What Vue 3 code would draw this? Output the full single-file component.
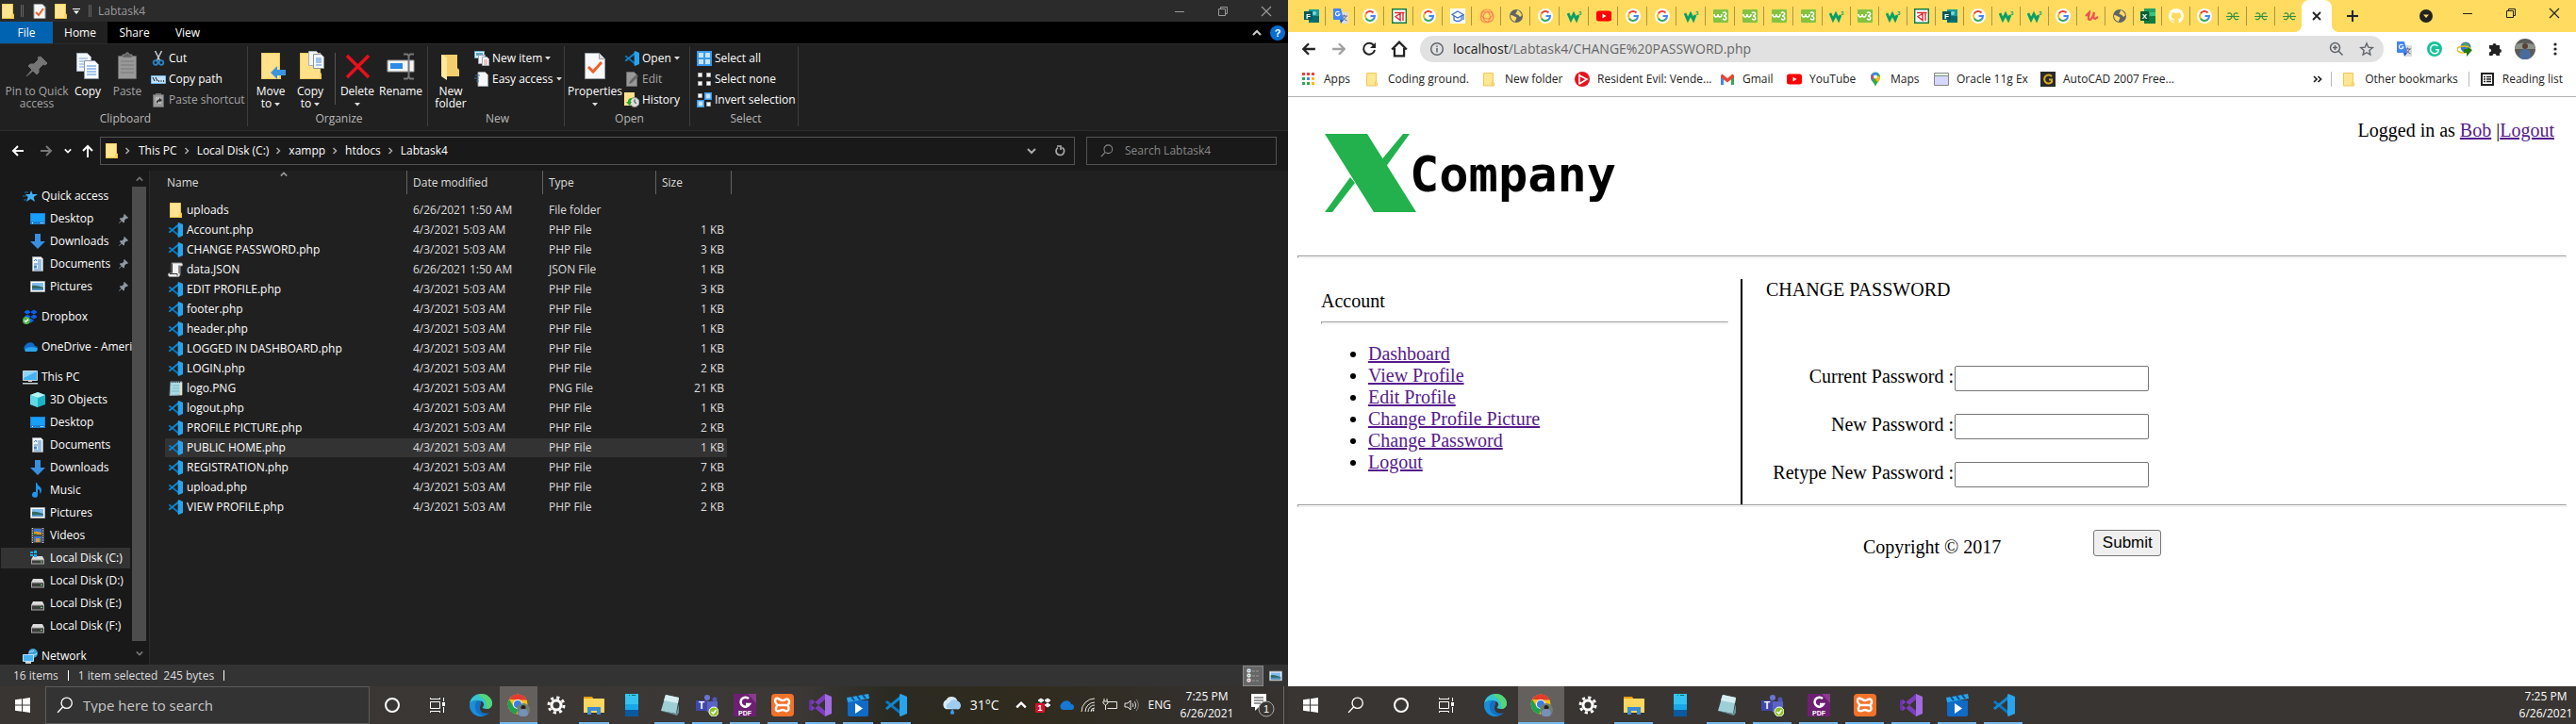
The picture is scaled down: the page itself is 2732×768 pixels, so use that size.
<script setup>
import { ref } from 'vue'

const clipboardSmall = [
  { icon: 'cut', text: 'Cut' },
  { icon: 'copypath', text: 'Copy path' },
  { icon: 'pasteshortcut', text: 'Paste shortcut', off: true }
]
const newSmall = [
  { icon: 'newitem', text: 'New item', menu: true },
  { icon: 'easyaccess', text: 'Easy access', menu: true }
]
const openSmall = [
  { icon: 'vscode', text: 'Open', menu: true },
  { icon: 'edit', text: 'Edit', off: true },
  { icon: 'history', text: 'History' }
]
const selectSmall = [
  { icon: 'selectall', text: 'Select all' },
  { icon: 'selectnone', text: 'Select none' },
  { icon: 'invert', text: 'Invert selection' }
]
const crumbs = ['This PC', 'Local Disk (C:)', 'xampp', 'htdocs', 'Labtask4']

const nav = [
  { head: { icon: 'quick', text: 'Quick access' }, items: [
    { icon: 'desktop', text: 'Desktop', pin: true },
    { icon: 'download', text: 'Downloads', pin: true },
    { icon: 'document', text: 'Documents', pin: true },
    { icon: 'picture', text: 'Pictures', pin: true }
  ] },
  { head: { icon: 'dropboxok', text: 'Dropbox' }, items: [] },
  { head: { icon: 'onedrive', text: 'OneDrive - Ameri' }, items: [] },
  { head: { icon: 'pc', text: 'This PC' }, items: [
    { icon: 'cube', text: '3D Objects' },
    { icon: 'desktop', text: 'Desktop' },
    { icon: 'document', text: 'Documents' },
    { icon: 'download', text: 'Downloads' },
    { icon: 'music', text: 'Music' },
    { icon: 'picture', text: 'Pictures' },
    { icon: 'video', text: 'Videos' },
    { icon: 'diskwin', text: 'Local Disk (C:)', on: true },
    { icon: 'disk', text: 'Local Disk (D:)' },
    { icon: 'disk', text: 'Local Disk (E:)' },
    { icon: 'disk', text: 'Local Disk (F:)' }
  ] },
  { head: { icon: 'network', text: 'Network' }, items: [] }
]

const old = '4/3/2021 5:03 AM'
const recent = '6/26/2021 1:50 AM'
const files = [
  ['folder', 'uploads', recent, 'File folder', ''],
  ['vscode', 'Account.php', old, 'PHP File', '1 KB'],
  ['vscode', 'CHANGE PASSWORD.php', old, 'PHP File', '3 KB'],
  ['json', 'data.JSON', recent, 'JSON File', '1 KB'],
  ['vscode', 'EDIT PROFILE.php', old, 'PHP File', '3 KB'],
  ['vscode', 'footer.php', old, 'PHP File', '1 KB'],
  ['vscode', 'header.php', old, 'PHP File', '1 KB'],
  ['vscode', 'LOGGED IN DASHBOARD.php', old, 'PHP File', '1 KB'],
  ['vscode', 'LOGIN.php', old, 'PHP File', '2 KB'],
  ['notes', 'logo.PNG', old, 'PNG File', '21 KB'],
  ['vscode', 'logout.php', old, 'PHP File', '1 KB'],
  ['vscode', 'PROFILE PICTURE.php', old, 'PHP File', '2 KB'],
  ['vscode', 'PUBLIC HOME.php', old, 'PHP File', '1 KB'],
  ['vscode', 'REGISTRATION.php', old, 'PHP File', '7 KB'],
  ['vscode', 'upload.php', old, 'PHP File', '2 KB'],
  ['vscode', 'VIEW PROFILE.php', old, 'PHP File', '2 KB']
]
const selected = ref('PUBLIC HOME.php')

const apps = [
  { icon: 'edge', name: 'Microsoft Edge' },
  { icon: 'chrome', name: 'Google Chrome', run: true, active: true },
  { icon: 'gear', name: 'Settings' },
  { icon: 'explorer', name: 'File Explorer', run: true },
  { icon: 'phone', name: 'Your Phone' },
  { icon: 'notepad', name: 'Notepad', run: true },
  { icon: 'teams', name: 'Microsoft Teams', run: true },
  { icon: 'foxit', name: 'Foxit PDF', run: true },
  { icon: 'xampp', name: 'XAMPP', run: true },
  { icon: 'vstudio', name: 'Visual Studio', run: true },
  { icon: 'movies', name: 'Movies', run: true },
  { icon: 'vscode', name: 'Visual Studio Code', run: true }
]

const wideTabs = ['forms', 'translate', 'google', 'bangla', 'google', 'scholar', 'rings', 'globe', 'google', 'w3', 'youtube', 'google', 'google', 'w3', 'w3s', 'w3s', 'w3s', 'w3s']
const slimTabs = ['w3', 'w3s', 'w3', 'bangla', 'forms', 'google', 'w3', 'w3', 'google', 'udemy', 'globe', 'excel', 'github', 'google', 'gfg', 'gfg', 'gfg']

const bookmarks = [
  { icon: 'appsgrid', text: 'Apps' },
  { icon: 'bmfolder', text: 'Coding ground.' },
  { icon: 'bmfolder', text: 'New folder' },
  { icon: 'redplay', text: 'Resident Evil: Vende...' },
  { icon: 'gmail', text: 'Gmail' },
  { icon: 'youtube', text: 'YouTube' },
  { icon: 'maps', text: 'Maps' },
  { icon: 'window', text: 'Oracle 11g Ex' },
  { icon: 'goldg', text: 'AutoCAD 2007 Free...' }
]
const links = ['Dashboard', 'View Profile', 'Edit Profile', 'Change Profile Picture', 'Change Password', 'Logout']
</script>

<template>
  <svg class="sprite" aria-hidden="true">
    <symbol id="folder" viewBox="0 0 16 16"><path d="M2 0h12v10.500l1 .5v5H2z" fill="#f0c040"/><path d="M2.500.5H13v10l1 .5v4H2.500z" fill="#ffe591"/><path d="M12 11h2v4.500h-2z" fill="#ffd65c"/></symbol>
    <symbol id="doccheck" viewBox="0 0 16 16"><path d="M2 .5h9l3 3v12H2z" fill="#f4f6f8" stroke="#9aa0a6"/><path d="M4 9l3 3 5-7" fill="none" stroke="#f0622a" stroke-width="2"/></symbol>
    <symbol id="pin" viewBox="0 0 32 32"><path d="M20 6l7 7-2 2-2-1-5 5v4l-2 2-4-4-7 6 6-7-4-4 2-2h4l5-5-1-2z" fill="#757575" stroke="#757575"/></symbol>
    <symbol id="minipin" viewBox="0 0 10 10"><path d="M6 0l4 4-1 1-1-.3-2 2v2L5 9.500 3 7.500.3 10 0 9.500 2.500 7 .8 5l.7-.8h2l2-2L5 1z" fill="#8e99a3"/></symbol>
    <symbol id="copy" viewBox="0 0 32 32"><path d="M4.500 2.500h11l4 4v15h-15z" fill="#f2f5fa" stroke="#a8b0ba"/><path d="M7 8h9M7 11h9M7 14h9M7 17h9" stroke="#7ea8dc"/><path d="M12.500 10.500h11l4 4v15h-15z" fill="#f8fafc" stroke="#8c949e"/><path d="M15 16h10M15 19h10M15 22h10M15 25h10" stroke="#4a8fe2"/></symbol>
    <symbol id="paste" viewBox="0 0 32 32"><path d="M6.500 5.500h19v24h-19z" fill="#999" stroke="#666"/><path d="M9 11h14M9 15h14M9 19h14M9 23h14" stroke="#777"/><path d="M11 7V4h3l1-2h2l1 2h3v3z" fill="#5f5f5f" stroke="#888"/></symbol>
    <symbol id="cut" viewBox="0 0 16 16"><path d="M4.500 0L10 11M11.500 0L6 11" stroke="#c5ccd3" stroke-width="1.500"/><circle cx="5" cy="12.500" r="2.300" fill="none" stroke="#2a86c8" stroke-width="1.700"/><circle cx="11" cy="12.500" r="2.300" fill="none" stroke="#2a86c8" stroke-width="1.700"/></symbol>
    <symbol id="copypath" viewBox="0 0 16 16"><path d="M.5 4.500h15v8H.5z" fill="#bfe0fa" stroke="#77b9ea"/><path d="M2 6l2 4M5 6l2 4" stroke="#111"/><path d="M8 10h1M10.500 10h1M13 10h1" stroke="#111" stroke-width="1.500"/></symbol>
    <symbol id="pasteshortcut" viewBox="0 0 16 16"><path d="M2.500 2.500h11v13h-11z" fill="#999" stroke="#666"/><path d="M5 1h6v2H5z" fill="#777"/><path d="M5 5h6v7H5z" fill="#bbb"/><path d="M6 12V9l3-2V5.500l3 3-3 2V9z" fill="#333"/></symbol>
    <symbol id="moveto" viewBox="0 0 32 32"><path d="M6 2h20v21l1 1v6H6z" fill="#f3cd5a"/><path d="M7 3h18v26H7z" fill="#ffe18a"/><path d="M16 23l7-7v4h9v6h-9v4z" fill="#3a94e0"/></symbol>
    <symbol id="copyto" viewBox="0 0 32 32"><path d="M5 2h22v21l1 1v6H5z" fill="#f3cd5a"/><path d="M6 3h20v26H6z" fill="#ffe18a"/><path d="M14.500.5h8l2 2v13h-10z" fill="#f2f5fa" stroke="#a8b0ba"/><path d="M19.500 3.500h8l3 3v12h-11z" fill="#f8fafc" stroke="#8c949e"/><path d="M22 8h6M22 10h6M22 12h6M22 15h6" stroke="#4a8fe2"/></symbol>
    <symbol id="delete" viewBox="0 0 32 32"><path d="M5 5l23 23M28 5L5 28" stroke="#e8101c" stroke-width="3.500"/></symbol>
    <symbol id="rename" viewBox="0 0 32 32"><path d="M2 10h28v12H2z" fill="#f5f5f5" stroke="#9a9a9a"/><path d="M5 13h13v6H5z" fill="#2e8ae6"/><path d="M19 3.500h4l1.500 2 1.500-2h4M24.500 4v25M19 29.500h4l1.500-2 1.500 2h4" fill="none" stroke="#777" stroke-width="2"/></symbol>
    <symbol id="newfolder" viewBox="0 0 32 32"><path d="M6 4h17v14l2 2v7H6z" fill="#f2cf6b"/><path d="M6 4l6 3v24l-6-4z" fill="#ffe79e"/></symbol>
    <symbol id="properties" viewBox="0 0 32 32"><path d="M5.500 2.500h15l6 6v21h-21z" fill="#f6f8fa" stroke="#9aa0a6"/><path d="M20.500 2.500v6h6" fill="#ddd" stroke="#9aa0a6"/><path d="M9 17l5 5 9-10" fill="none" stroke="#f0622a" stroke-width="3"/></symbol>
    <symbol id="newitem" viewBox="0 0 16 16"><path d="M.5.5h10v7H.5z" fill="#dff0fb" stroke="#6aa9cf"/><path d="M2 2h7v3H2z" fill="#5aa0c0"/><path d="M4.500 4.500h7v9h-7z" fill="#f2f5fa" stroke="#9aa5b0"/><path d="M8.500 6.500h5l2 2v7h-7z" fill="#fff" stroke="#9aa5b0"/><path d="M10 10h4M10 12h4M10 14h4" stroke="#d88"/></symbol>
    <symbol id="easyaccess" viewBox="0 0 16 16"><path d="M4 .5h7.500l3 3v12H4z" fill="#f6f8fa" stroke="#9aa0a6"/><path d="M1 4h5M0 7h5M2 10h3" stroke="#3c6ea8"/></symbol>
    <symbol id="vscode" viewBox="0 0 24 24"><path d="M1 8.500L3 7l15 12v4L1.500 9.500z" fill="#0b76bd"/><path d="M1 15.500L3 17 18 5V1L1.500 14.500z" fill="#1088d0"/><path d="M17 0l7 3v18l-7 3-1-1V1z" fill="#28a4ee"/></symbol>
    <symbol id="edit" viewBox="0 0 16 16"><path d="M2.500.5h8l3 3v12h-11z" fill="#999" stroke="#6a6a6a"/><path d="M5 13l1-3 7-7 2 2-7 7z" fill="#666"/></symbol>
    <symbol id="history" viewBox="0 0 16 16"><path d="M0 0h11v14H0z" fill="#ffe18a"/><circle cx="11" cy="10.500" r="5" fill="#ddd" stroke="#888"/><path d="M11 7.500v3l2 1" stroke="#333" fill="none"/><path d="M8 6C4 6 4 9 4 10H2l3.500 4L8 10H6.500C6.500 8 8 8 8 8z" fill="#28a428"/></symbol>
    <symbol id="selectall" viewBox="0 0 16 16"><path d="M0 0h16v16H0z" fill="#3a9ae8"/><path d="M2 2h5v5H2zM9 2h5v5H9zM2 9h5v5H2zM9 9h5v5H9z" fill="#c4e4fb"/></symbol>
    <symbol id="selectnone" viewBox="0 0 16 16"><path d="M1.500 1.500h4v4h-4zM10.500 1.500h4v4h-4zM1.500 10.500h4v4h-4zM10.500 10.500h4v4h-4z" fill="#fff" stroke="#aaa"/></symbol>
    <symbol id="invert" viewBox="0 0 16 16"><path d="M1.500 1.500h4v4h-4zM10.500 10.500h4v4h-4z" fill="#fff" stroke="#aaa"/><path d="M8.800.8h6.400v6.400H8.800zM.8 8.800h6.400v6.400H.8z" fill="#c4e4fb" stroke="#3a9ae8" stroke-width="1.600"/></symbol>
    <symbol id="mag" viewBox="0 0 16 16"><circle cx="9.500" cy="6" r="5" fill="none" stroke="currentColor" stroke-width="1.200"/><path d="M6 9.500L1 15" stroke="currentColor" stroke-width="1.300"/></symbol>
    <symbol id="arrowl" viewBox="0 0 14 14"><path d="M7 2L2 7l5 5M2 7h11" fill="none" stroke="currentColor" stroke-width="2"/></symbol>
    <symbol id="arrowr" viewBox="0 0 14 14"><path d="M7 2l5 5-5 5M12 7H1" fill="none" stroke="currentColor" stroke-width="2"/></symbol>
    <symbol id="arrowu" viewBox="0 0 14 14"><path d="M2 7l5-5 5 5M7 2v12" fill="none" stroke="currentColor" stroke-width="2"/></symbol>
    <symbol id="chevd" viewBox="0 0 10 10"><path d="M1 3l4 4 4-4" fill="none" stroke="currentColor" stroke-width="2"/></symbol>
    <symbol id="chevu" viewBox="0 0 10 10"><path d="M1 7l4-4 4 4" fill="none" stroke="currentColor" stroke-width="2"/></symbol>
    <symbol id="chevr" viewBox="0 0 10 10"><path d="M3.500 2l3 3-3 3" fill="none" stroke="currentColor" stroke-width="1.500"/></symbol>
    <symbol id="caret" viewBox="0 0 6 4"><path d="M0 0h6L3 3.500z" fill="currentColor"/></symbol>
    <symbol id="qatmenu" viewBox="0 0 8 6"><path d="M0 .5h8" stroke="#fff"/><path d="M1 2.500h6L4 6z" fill="#fff"/></symbol>
    <symbol id="refresh" viewBox="0 0 12 12"><path d="M8.500 2.500A4.300 4.300 0 1 1 4 2.600M3 1h4v4" fill="none" stroke="currentColor" stroke-width="1.700"/></symbol>

    <symbol id="quick" viewBox="0 0 16 16"><path d="M9 2l1.600 4H16l-4.300 3L13 14l-4.500-3L4 14l1.600-5L3 6h4.600z" fill="#3fb0f5"/><path d="M2 4h4M0 8h4M1 12h3" stroke="#1d74b5"/></symbol>
    <symbol id="desktop" viewBox="0 0 16 16"><path d="M0 2h16v12H0z" fill="#1c7fd0"/><path d="M1 3h14v8H1z" fill="#17a0fb"/><path d="M2 12.500h1M11 12.500h1M13 12.500h1" stroke="#fff"/></symbol>
    <symbol id="download" viewBox="0 0 16 16"><path d="M5 0h6v8h5l-8 8-8-8h5z" fill="#3790e4"/></symbol>
    <symbol id="document" viewBox="0 0 16 16"><path d="M2.500.5h9l2 2v13h-11z" fill="#f5f7fa" stroke="#9aa0a6"/><path d="M4 5l2-2 1 2M8 4h4M8 6h4M4 8h8M8 10h4M8 12h4M4 14h8" stroke="#3c86cc" fill="none"/><path d="M4 9.500h3v3H4z" fill="#3c86cc"/></symbol>
    <symbol id="picture" viewBox="0 0 16 16"><path d="M.5 2.500h15v11H.5z" fill="#fff" stroke="#a8a8a8"/><path d="M2 4h12v8H2z" fill="#7fbdf0"/><path d="M2 7c4-1 8 1 12 2v3H2z" fill="#2f6a66"/><path d="M2 10h12v2H2z" fill="#4a8fc4"/></symbol>
    <symbol id="dropboxok" viewBox="0 0 16 16"><path d="M5 1l3 2-3 2-3-2zM12 1l3 2-3 2-3-2zM5 6l3 2-3 2-3-2zM12 6l3 2-3 2-3-2zM8.500 10l3 2-3 2-3-2z" fill="#0a62f5" stroke="#0a62f5"/><circle cx="4" cy="12" r="4" fill="#4fb848"/><path d="M2 12l1.500 1.500L6 10.500" stroke="#fff" fill="none" stroke-width="1.500"/></symbol>
    <symbol id="onedrive" viewBox="0 0 16 16"><path d="M4 13a4 4 0 0 1-1-7 5.500 5.500 0 0 1 10 1 3 3 0 0 1 0 6z" fill="#0f6cc8"/><path d="M3 13a3 3 0 0 1 1-4l5-1 6 1a3 3 0 0 1-1 4z" fill="#2aa4ec"/></symbol>
    <symbol id="pc" viewBox="0 0 16 16"><path d="M.5 1.500h15v10H.5z" fill="#45b2f5" stroke="#c8d4dc"/><path d="M1 2h14L1 9z" fill="#8fd4fb"/><path d="M6 12h4v1H6zM0 14h16v1.500H0z" fill="#c8d4dc"/></symbol>
    <symbol id="cube" viewBox="0 0 16 16"><path d="M8 0l8 3v10l-8 3-8-3V3z" fill="#1ab4c8"/><path d="M8 0l8 3-8 3-8-3z" fill="#b8f2f5"/><path d="M0 3l8 3v10l-8-3z" fill="#62d8e2"/></symbol>
    <symbol id="music" viewBox="0 0 16 16"><path d="M7 0c1 4 5 4 5 8 0 2-1 3-2 4 1-3 0-5-2-5v6a3 3 0 1 1-2-3V0z" fill="#1b96f2"/></symbol>
    <symbol id="video" viewBox="0 0 16 16"><path d="M1 0h14v16H1z" fill="#4a4a4a"/><path d="M2.500 0v16M13.500 0v16" stroke="#ddd" stroke-dasharray="1 1.500"/><path d="M4 1h8v6H4zM4 9h8v6H4z" fill="#3c78d8"/><path d="M4 4h4l4 1v2H4zM6 11h4v4H6z" fill="#e09a20"/><path d="M4 6h3v1H4z" fill="#2a9a40"/></symbol>
    <symbol id="disk" viewBox="0 0 16 16"><path d="M3 6h10l2 4H1z" fill="#dcdcdc"/><path d="M1 9.500h14v6H1z" fill="#a8a8a8"/><path d="M2 10.500h12v4H2z" fill="#3c3c3c"/><path d="M11 12h2v1h-2z" fill="#4fe04f"/></symbol>
    <symbol id="diskwin" viewBox="0 0 16 16"><path d="M3 6h10l2 4H1z" fill="#dcdcdc"/><path d="M1 9.500h14v5H1z" fill="#a8a8a8"/><path d="M2 10.500h12v3H2z" fill="#3c3c3c"/><path d="M11 11.500h2v1h-2z" fill="#4fe04f"/><path d="M0 1h3v2H0zM4 0h3v3H4zM0 4h3v2H0zM4 4h3v3H4z" fill="#12b0f4"/></symbol>
    <symbol id="network" viewBox="0 0 16 16"><circle cx="11" cy="5" r="5" fill="#3f9fd8"/><path d="M7 4c2-2 3 0 5-2M8 7c3-1 4 1 7-2" stroke="#c8ecff" fill="none"/><path d="M.5 6.500h11v7H.5z" fill="#45b2f5" stroke="#bfe4f8"/><path d="M3 15h6" stroke="#c8d4dc" stroke-width="2"/></symbol>
    <symbol id="json" viewBox="0 0 16 16"><path d="M4 1h10c2 0 2 3 1 3h-2v8c0 3-1 3.500-3 3.500H2C0 15 0 12 1 12h3z" fill="#f2f2f2" stroke="#999"/><path d="M4.500 1.500v10M12 3.500v8.500M2 12.500h8v2" stroke="#333" fill="none"/></symbol>
    <symbol id="notes" viewBox="0 0 16 16"><path d="M3 1h12v14L2 15.500z" fill="#a9dbe4" stroke="#86a0a6"/><path d="M14 2v13" stroke="#e8e0c8" stroke-width="2"/><path d="M4 1h10" stroke="#444" stroke-width="2" stroke-dasharray="1 1"/><path d="M5 5h7M5 8h7M4 11h8" stroke="#7cb9c8"/></symbol>
    <symbol id="details" viewBox="0 0 16 16"><path d="M2 1h3v3H2zM2 6h3v3H2zM2 11h3v3H2z" fill="#fff" stroke="#ddd"/><path d="M7 3h3M11 3h3M7 8h3M11 8h3M7 13h3M11 13h3" stroke="#999"/><path d="M3 2h1v1H3z" fill="#27c"/><path d="M3 7h1v1H3z" fill="#2a4"/><path d="M3 12h1v1H3z" fill="#c33"/></symbol>

    <symbol id="winlogo" viewBox="0 0 16 16"><path d="M0 2.300L7 1.300V7.500H0zM8 1.200L16 0v7.500H8zM0 8.500h7v6.200l-7-1zM8 8.500h8V16l-8-1.200z" fill="#fff"/></symbol>
    <symbol id="ring" viewBox="0 0 18 18"><circle cx="9" cy="9" r="7" fill="none" stroke="#fff" stroke-width="2"/></symbol>
    <symbol id="taskview" viewBox="0 0 18 18"><path d="M1.500 5.500h10v7h-10zM1 2.500h11M1 15.500h11M1.500 1v2M11.500 1v2M1.500 15v2M11.500 15v2M15.500 1v4M15.500 11v6" fill="none" stroke="#fff"/><path d="M14 6h3v4h-3z" fill="#fff"/></symbol>
    <symbol id="edge" viewBox="0 0 24 24"><path d="M12 0C5 0 0 5.500 0 12s5 12 12 12c4 0 7-2 9-4-3 1.500-8 1-9.500-2.500C10 14 12 12 12 11z" fill="#1470c4"/><path d="M0 11C1 4 6 0 12 0c7 0 12 5 12 10 0 4-3 6-6 6s-5-1-4-2c3-3 0-7-5-7-4 0-8 1-9 4z" fill="#36c5d0"/><path d="M12 0c7 0 12 5 12 10 0 4-3 6-6 6 1-7-2-12-9-14z" fill="#55d573"/><path d="M0 12c1-4 5-6 9-5-4 2-4 9-1 13 2 2 5 3 7 3.500C7 26 0 19 0 12z" fill="#1a8fd8"/></symbol>
    <symbol id="chrome" viewBox="0 0 24 24"><circle cx="11" cy="11" r="10.500" fill="#fbc116"/><path d="M2 5.700A10.500 10.500 0 0 1 20.500 6.500H11z" fill="#e33b2e"/><path d="M2 5.700l5 8.300 4 1-1.500 6.400A10.500 10.500 0 0 1 2 5.700z" fill="#1fa150"/><circle cx="11" cy="11" r="5" fill="#fff"/><circle cx="11" cy="11" r="4" fill="#3b7cea"/><circle cx="17" cy="17" r="7" fill="#6f7f70"/><circle cx="17" cy="14.500" r="2.500" fill="#2a211e"/><path d="M12 22c0-5 2-6 5-6s5 1 5 6c-2 3-8 3-10 0z" fill="#7790b8"/></symbol>
    <symbol id="gear" viewBox="0 0 20 20"><circle cx="10" cy="10" r="5" fill="none" stroke="#fff" stroke-width="3"/><circle cx="10" cy="10" r="8" fill="none" stroke="#fff" stroke-width="3" stroke-dasharray="3.140 3.140"/></symbol>
    <symbol id="explorer" viewBox="0 0 24 24"><path d="M1 3h9l2 3H1z" fill="#e8a00c"/><path d="M1 5h22v15H1z" fill="#ffd75e"/><path d="M5 22v-8h14v8h-4v-4H9v4z" fill="#3b8ad8"/></symbol>
    <symbol id="phone" viewBox="0 0 24 24"><path d="M5 0h14v24H5z" fill="#0a5aa0"/><path d="M5 0h14v17H5z" fill="#18a8e8"/><path d="M5 0h14v11H5z" fill="#35c4f2"/><path d="M9 1.500h1M12 1.500h4" stroke="#075"/></symbol>
    <symbol id="notepad" viewBox="0 0 24 24"><path d="M8 1l14 3-3 17-16-3z" fill="#9fcfd6"/><path d="M8 1l14 3-1 6L6 7z" fill="#d6eef0"/><path d="M3 18l16 3 3-10v9l-2 3z" fill="#6a9096"/></symbol>
    <symbol id="teams" viewBox="0 0 24 24"><circle cx="12" cy="4" r="3" fill="#6b74d6"/><circle cx="20" cy="6" r="2.500" fill="#4f58b8"/><path d="M10 8h13v6c0 7-10 8-13 3z" fill="#5b63c4"/><path d="M0 7h12v11H0z" fill="#3f48a8"/><text x="6" y="16" text-anchor="middle" font-family="Liberation Sans" font-size="10" font-weight="700" fill="#fff">T</text><circle cx="19" cy="19" r="5" fill="#8cc220" stroke="#fff"/><path d="M16.500 19l2 2 3-4" fill="none" stroke="#fff" stroke-width="1.500"/></symbol>
    <symbol id="foxit" viewBox="0 0 24 24"><path d="M0 0h24v24H0z" fill="#6d1f72"/><path d="M15 0h9v10z" fill="#8c3a90"/><path d="M16 5a5 5 0 1 0 1 6h-4" fill="none" stroke="#fff" stroke-width="2.500"/><text x="12" y="23" text-anchor="middle" font-family="Liberation Sans" font-size="7" font-weight="700" fill="#fff">PDF</text></symbol>
    <symbol id="xampp" viewBox="0 0 24 24"><rect width="24" height="24" rx="4" fill="#f2722a"/><path d="M5 5c3-1 4 2 7 2s4-3 6-1 1 5-1 6c2 2 2 5 0 6s-3-1-5-1-4 2-6 1-1-5 1-6c-3-2-4-5-2-7zM8 12h8" fill="none" stroke="#fff" stroke-width="2.500"/></symbol>
    <symbol id="vstudio" viewBox="0 0 24 24"><path d="M17 0l7 3v18l-7 3z" fill="#a36be0"/><path d="M17 0v6L3 18l-3-1.500V14zM17 24v-6L3 6 0 7.500V10z" fill="#7b3dbe"/><path d="M0 7.500L2.500 6v12L0 16.500z" fill="#6a30a8"/></symbol>
    <symbol id="movies" viewBox="0 0 24 24"><path d="M1 7h22v15c0 1-1 2-2 2H3c-1 0-2-1-2-2z" fill="#0f6bc8"/><path d="M0 4l23-4 1 5L1 9z" fill="#28a6e8"/><path d="M5 3l3 4M11 2l3 4M17 1l3 4" stroke="#0a4a90" stroke-width="2"/><path d="M9 10l8 5.500L9 21z" fill="#fff"/></symbol>
    <symbol id="weather" viewBox="0 0 22 22"><path d="M5 15a5 5 0 0 1 0-9 6 6 0 0 1 11 1 4.500 4.500 0 0 1 1 8z" fill="#d6ebfb"/><path d="M6 14a3 3 0 0 1 2-5 5 5 0 0 1 9-1 4 4 0 0 1 0 7z" fill="#9fcdf2"/><path d="M11 14l2 4a2 2 0 1 1-4 0z" fill="#3a9ae8"/></symbol>
    <symbol id="dropboxn" viewBox="0 0 18 18"><path d="M6 2l3 2-3 2-3-2zM13 2l3 2-3 2-3-2zM6 7l3 2-3 2-3-2zM13 7l3 2-3 2-3-2z" fill="#fff" stroke="#fff"/><rect y="7" width="10" height="10" rx="1" fill="#d9102a"/><text x="5" y="15" text-anchor="middle" font-family="Liberation Sans" font-size="9" font-weight="700" fill="#fff">1</text></symbol>
    <symbol id="trayonedrive" viewBox="0 0 16 16"><path d="M4 13a4 4 0 0 1-1-7 5.500 5.500 0 0 1 10 1 3 3 0 0 1 0 6z" fill="#1478d4"/></symbol>
    <symbol id="wifi" viewBox="0 0 16 16"><path d="M1 15A14 14 0 0 1 15 1M5 15A10 10 0 0 1 15 5M8 15a7 7 0 0 1 7-7M11 15a4 4 0 0 1 4-4" fill="none" stroke="#e6e6e6"/><circle cx="13.500" cy="13.500" r="1" fill="#fff"/></symbol>
    <symbol id="battery" viewBox="0 0 16 16"><path d="M5.500 4.500h10v7h-10M2 1v3M5 1v3M1 4h5v2L3.500 8 1 6zM3.500 8v5" fill="none" stroke="#e6e6e6"/></symbol>
    <symbol id="volume" viewBox="0 0 16 16"><path d="M1 6h3l3-3v10l-3-3H1z" fill="none" stroke="#e6e6e6"/><path d="M9 6c1 1 1 3 0 4M11 4c2 2 2 6 0 8" fill="none" stroke="#e6e6e6"/><path d="M13 2c3 3 3 9 0 12" fill="none" stroke="#888"/></symbol>
    <symbol id="note" viewBox="0 0 26 28"><path d="M1 2h16v14h-8l-4 4v-4H1z" fill="#fff"/><path d="M4 6h10M4 9h10M4 12h7" stroke="#333"/><circle cx="17" cy="18" r="8" fill="#3a3633" stroke="#aaa"/><text x="17" y="22" text-anchor="middle" font-family="Liberation Sans" font-size="11" fill="#fff">1</text></symbol>

    <symbol id="forms" viewBox="0 0 16 16"><path d="M5 1h11v14H5z" fill="#1a9ba1"/><path d="M5 8h11v7H5z" fill="#036c70"/><circle cx="11" cy="5" r="2" fill="#7fd8dc"/><path d="M0 3h9v9H0z" fill="#05595c"/><text x="4.500" y="10.500" text-anchor="middle" font-family="Liberation Sans" font-size="8" font-weight="700" fill="#fff">F</text></symbol>
    <symbol id="translate" viewBox="0 0 16 16"><path d="M6 4h10v12H9z" fill="#dcdcdc"/><path d="M8 8h7M11.500 6.500V8M9.500 8c1 3 3 4 5 5M13.500 8c-1 3-3 4-4 5" stroke="#667" fill="none"/><path d="M0 0h8l3 12H1c-1 0-1-1-1-1z" fill="#4285f4"/><path d="M7 12h4l-3 4z" fill="#2a56c6"/><path d="M6.500 4A2.300 2.300 0 1 0 7 6H5" fill="none" stroke="#fff" stroke-width="1.100"/></symbol>
    <symbol id="google" viewBox="0 0 16 16"><circle cx="8" cy="8" r="8" fill="#fff"/><path d="M3.700 5.500A5 5 0 0 1 11.500 4.500" fill="none" stroke="#ea4335" stroke-width="2"/><path d="M3.700 5.500a5 5 0 0 0 0 5" fill="none" stroke="#fbbc05" stroke-width="2"/><path d="M3.700 10.500a5 5 0 0 0 7.800 1" fill="none" stroke="#34a853" stroke-width="2"/><path d="M11.200 11.800A5 5 0 0 0 13 8H8.500" fill="none" stroke="#4285f4" stroke-width="2"/></symbol>
    <symbol id="bangla" viewBox="0 0 16 16"><path d="M.7.7h14.600v14.600H.7z" fill="#fff" stroke="#0a7a45" stroke-width="1.400"/><path d="M3 4.500h10.500M12 4.500v8.500M9 4.500v8L4 8.500l5-3" fill="none" stroke="#e3262e" stroke-width="1.400"/></symbol>
    <symbol id="scholar" viewBox="0 0 16 16"><path d="M0 0h16v16H0z" fill="#fff"/><path d="M8 3l6 3.500L8 10 2 6.500zM4 8v4c2 2 6 2 8 0V8M14 7v5" fill="none" stroke="#3a74c8" stroke-width="1.300"/></symbol>
    <symbol id="rings" viewBox="0 0 16 16"><g fill="none" stroke="#fb8a4a" stroke-width="1.200"><ellipse cx="8" cy="6" rx="6" ry="5"/><ellipse cx="6.500" cy="9" rx="5" ry="6"/><ellipse cx="9.500" cy="9" rx="5.500" ry="5.500" stroke="#f77a66"/></g></symbol>
    <symbol id="globe" viewBox="0 0 16 16"><circle cx="8" cy="8" r="7" fill="#5f6368"/><path d="M2 7c3 0 4 2 6 2 1 2-1 3-1 5-3-1-5-3-5-7zM9 2c-1 2 0 3-2 3 1 2 4 1 4 3 1 1 2 1 3-1-1-3-3-5-5-5z" fill="#ffdc5f"/></symbol>
    <symbol id="w3" viewBox="0 0 16 16"><path d="M1 5l3 7 3-6 3 6 2-5" fill="none" stroke="#04a065" stroke-width="2.800"/><text x="13.700" y="7" text-anchor="middle" font-family="Liberation Sans" font-size="6" font-weight="700" fill="#04a065">3</text></symbol>
    <symbol id="w3s" viewBox="0 0 16 16"><rect y="1" width="16" height="14" rx="1" fill="#84c341"/><path d="M1 6c0 4 4 4 4 0 0 4 4 4 4 0M10 5c2-2 5 0 3 2-1 1-1 1-2 1 3 0 4 4 1 4l-2-1" fill="none" stroke="#fff" stroke-width="1.500"/></symbol>
    <symbol id="youtube" viewBox="0 0 16 16"><rect y="2.500" width="16" height="11" rx="2.500" fill="#f00"/><path d="M6.500 5.500v5l4-2.500z" fill="#fff"/></symbol>
    <symbol id="udemy" viewBox="0 0 16 16"><path d="M2 8l4-4c0 3-3 7 0 8 3 0 4-5 5-8-1 4-1 7 1 7l3-2" fill="none" stroke="#ec5252" stroke-width="2.200"/></symbol>
    <symbol id="excel" viewBox="0 0 16 16"><path d="M4 0h12v16H4z" fill="#21a366"/><path d="M10 8h6v8H4v-4z" fill="#107c41"/><path d="M10 4h6v4h-6z" fill="#33c481"/><path d="M0 3h9v10H0z" fill="#0b5c32"/><text x="4.500" y="11" text-anchor="middle" font-family="Liberation Sans" font-size="8" font-weight="700" fill="#fff">X</text></symbol>
    <symbol id="github" viewBox="0 0 16 16"><circle cx="8" cy="8" r="8" fill="#fffdf4"/><path d="M4 4l2 .7h4L12 4l.4 2c2 3 0 5-2.400 5.300l.7 1.200V16H5.400v-2C3 14 3 12 2 12c2-1 2 1 3.500.7l.5-1.400C3 11 2 8 3.600 6z" fill="#ffdc5f"/></symbol>
    <symbol id="gfg" viewBox="0 0 16 16"><path d="M1 8.500h14M2.500 5.500c2-1.500 4.500-.5 4.500 2.500s-2.500 4.500-5 3M13.500 5.500c-2-1.500-4.500-.5-4.500 2.500s2.500 4.500 5 3" fill="none" stroke="#2f8d46" stroke-width="1.200"/></symbol>
    <symbol id="appsgrid" viewBox="0 0 16 16"><path d="M1 1h3v3H1z" fill="#ea4335"/><path d="M6 1h3v3H6zM11 1h3v3h-3z" fill="#e8453c"/><path d="M1 6h3v3H1z" fill="#34a853"/><path d="M6 6h3v3H6z" fill="#4285f4"/><path d="M11 6h3v3h-3z" fill="#fbbc05"/><path d="M1 11h3v3H1zM6 11h3v3H6z" fill="#34a853"/><path d="M11 11h3v3h-3z" fill="#fbbc05"/></symbol>
    <symbol id="bmfolder" viewBox="0 0 16 16"><path d="M1.500 1.500h10v9.500l1 1v3h-11z" fill="#ffe690" stroke="#ecc85c"/><path d="M10.500 11v4" stroke="#ecc85c"/></symbol>
    <symbol id="redplay" viewBox="0 0 16 16"><circle cx="8" cy="8" r="8" fill="#e5141f"/><path d="M5 2.500v11M5 4l8 4-8 5" fill="none" stroke="#fff" stroke-width="1.600"/></symbol>
    <symbol id="gmail" viewBox="0 0 16 16"><path d="M1 4h3v10H1z" fill="#4285f4"/><path d="M12 4h3v10h-3z" fill="#34a853"/><path d="M1 4l1.500-1.500L8 7l5.500-4.500L15 4v2l-7 5.500L1 6z" fill="#ea4335"/></symbol>
    <symbol id="maps" viewBox="0 0 16 16"><path d="M8 16c-1-4-5-6-5-10.500a5 5 0 0 1 10 0C13 10 9 12 8 16z" fill="#34a853"/><path d="M3 6a5 5 0 0 1 8-4L4 10z" fill="#4285f4"/><path d="M3.500 3L7 6l-3 3z" fill="#ea4335"/><path d="M11 4l2 2c0 2-1 3-2 5L8 9z" fill="#fbbc05"/><circle cx="8" cy="5.500" r="2" fill="#fff"/></symbol>
    <symbol id="window" viewBox="0 0 16 16"><path d="M.5 1.500h15v13H.5z" fill="#d6d6ff" stroke="#888"/><path d="M1 2h14v3H1z" fill="#e8f4e8"/><path d="M1 4.500h14" stroke="#7a9a7a"/></symbol>
    <symbol id="goldg" viewBox="0 0 16 16"><path d="M0 0h16v16H0z" fill="#2a2a2a"/><path d="M12 5a4.500 4.500 0 1 0 0 6V8.500H9" fill="none" stroke="#d8a81c" stroke-width="2"/></symbol>
    <symbol id="reading" viewBox="0 0 16 16"><path d="M2 2h12v12H2z" fill="none" stroke="#222" stroke-width="2"/><path d="M4 5.500h2M7 5.500h5M4 8h2M7 8h5M4 10.500h2M7 10.500h5" stroke="#222" stroke-width="1.400"/></symbol>
    <symbol id="reload" viewBox="0 0 16 16"><path d="M13.500 5A6 6 0 1 0 14 9" fill="none" stroke="#222" stroke-width="2"/><path d="M15 1v6H9z" fill="#222"/></symbol>
    <symbol id="home" viewBox="0 0 16 16"><path d="M1 8.500L8 1.500l7 7M3.500 7v7.500h9V7" fill="none" stroke="#222" stroke-width="2"/></symbol>
    <symbol id="info" viewBox="0 0 16 16"><circle cx="8" cy="8" r="6.300" fill="none" stroke="#5f6368" stroke-width="1.500"/><path d="M8 7v4.500M8 4.500V6" stroke="#5f6368" stroke-width="1.500"/></symbol>
    <symbol id="zoomin" viewBox="0 0 16 16"><circle cx="6.500" cy="6.500" r="5" fill="none" stroke="#5f6368" stroke-width="1.500"/><path d="M10 10l4.500 4.500M4 6.500h5M6.500 4v5" stroke="#5f6368" stroke-width="1.500"/></symbol>
    <symbol id="star" viewBox="0 0 16 16"><path d="M8 2l1.800 4.200 4.500.4-3.400 3 1 4.400L8 11.700 4.100 14l1-4.400-3.400-3 4.500-.4z" fill="none" stroke="#5f6368" stroke-width="1.400"/></symbol>
    <symbol id="grammarly" viewBox="0 0 16 16"><circle cx="8" cy="8" r="8" fill="#15c39a"/><path d="M11.500 5a4.600 4.600 0 1 0 .6 5.500V8.700H9" fill="none" stroke="#fff" stroke-width="1.500"/></symbol>
    <symbol id="idm" viewBox="0 0 16 16"><circle cx="9" cy="6" r="5.500" fill="#3a78c8"/><path d="M6 2c3-1 6 0 7 2l-4 3z" fill="#57a64a"/><ellipse cx="7" cy="8.500" rx="7" ry="3.500" fill="none" stroke="#e8c020" stroke-width="1.500"/><path d="M7 8h4V6l5 3-6 7v-4H7z" fill="#1f7a16"/></symbol>
    <symbol id="puzzle" viewBox="0 0 16 16"><path d="M2 4h3.500a2 2 0 1 1 4 0H13v4a2 2 0 1 1 0 4v3H9.500a2 2 0 1 0-4 0H2v-3.500a2 2 0 1 0 0-4z" fill="#222"/></symbol>
    <symbol id="avatar" viewBox="0 0 22 22"><circle cx="11" cy="11" r="11" fill="#5a5a58"/><path d="M1 7c4-3 6-2 10-2s7 0 10 2l1 4H0z" fill="#8a948a"/><circle cx="11" cy="8" r="3" fill="#5c3e34"/><path d="M5 20c0-7 2-9 6-9s6 2 6 9c-4 3-8 3-12 0z" fill="#4a6c9c"/></symbol>
    <symbol id="dots" viewBox="0 0 16 16"><circle cx="8" cy="3" r="1.600" fill="#222"/><circle cx="8" cy="8" r="1.600" fill="#222"/><circle cx="8" cy="13" r="1.600" fill="#222"/></symbol>
    <symbol id="min" viewBox="0 0 12 12"><path d="M1 6.500h10" stroke="currentColor"/></symbol>
    <symbol id="restore" viewBox="0 0 12 12"><path d="M1.500 3.500h7v7h-7zM3.500 3V1.500h7v7H9" fill="none" stroke="currentColor"/></symbol>
    <symbol id="close" viewBox="0 0 12 12"><path d="M1 1l10 10M11 1L1 11" stroke="currentColor" stroke-width="1.200"/></symbol>
    <symbol id="tabx" viewBox="0 0 10 10"><path d="M1 1l8 8M9 1L1 9" stroke="#222" stroke-width="1.800"/></symbol>
    <symbol id="plus" viewBox="0 0 12 12"><path d="M6 0v12M0 6h12" stroke="#222" stroke-width="2"/></symbol>
    <symbol id="tabmenu" viewBox="0 0 14 14"><circle cx="7" cy="7" r="7" fill="#222"/><path d="M4 5.500h6L7 9z" fill="#ffdc5f"/></symbol>
    <symbol id="help" viewBox="0 0 16 16"><circle cx="8" cy="8" r="8" fill="#0a6cd0"/><text x="8" y="12" text-anchor="middle" font-family="Liberation Sans" font-size="11" font-weight="700" fill="#fff">?</text></symbol>
    <symbol id="more" viewBox="0 0 10 10"><path d="M1 2l3 3-3 3M5.500 2l3 3-3 3" fill="none" stroke="#222" stroke-width="1.700"/></symbol>
  </svg>

  <div class="desk">
    <section class="screen">
      <div class="explorer">
        <header class="title">
          <svg class="i16"><use href="#folder" /></svg>
          <i class="tick"></i>
          <svg class="i16 quick1"><use href="#doccheck" /></svg>
          <svg class="i16"><use href="#folder" /></svg>
          <svg class="tcaret"><use href="#qatmenu" /></svg>
          <i class="tick"></i>
          <span class="tname">Labtask4</span>
          <div class="winbtns">
            <button aria-label="Minimize"><svg class="i12"><use href="#min" /></svg></button>
            <button aria-label="Restore"><svg class="i12"><use href="#restore" /></svg></button>
            <button aria-label="Close"><svg class="i12"><use href="#close" /></svg></button>
          </div>
        </header>
        <nav class="tabs">
          <button class="file">File</button>
          <button class="cur">Home</button>
          <button>Share</button>
          <button>View</button>
          <span class="grow"></span>
          <button class="mini" aria-label="Collapse ribbon"><svg class="i10"><use href="#chevu" /></svg></button>
          <button class="mini help" aria-label="Help"><svg class="i16"><use href="#help" /></svg></button>
        </nav>
        <div class="ribbon">
          <div class="group g1">
            <div class="tools">
              <button class="big w70 off"><svg><use href="#pin" /></svg>Pin to Quick access</button>
              <button class="big w38"><svg><use href="#copy" /></svg>Copy</button>
              <button class="big w46 off"><svg><use href="#paste" /></svg>Paste</button>
              <div class="smalls">
                <button v-for="s in clipboardSmall" :key="s.text" :class="{ off: s.off }"><svg class="i16"><use :href="'#' + s.icon" /></svg>{{ s.text }}</button>
              </div>
            </div>
            <div class="glabel">Clipboard</div>
          </div>
          <div class="group g2">
            <div class="tools">
              <button class="big w42"><svg><use href="#moveto" /></svg><span>Move<br>to <svg class="caret"><use href="#caret" /></svg></span></button>
              <button class="big w42"><svg><use href="#copyto" /></svg><span>Copy<br>to <svg class="caret"><use href="#caret" /></svg></span></button>
              <i class="rule"></i>
              <button class="big w42"><svg><use href="#delete" /></svg><span>Delete<br><svg class="caret"><use href="#caret" /></svg></span></button>
              <button class="big w50"><svg><use href="#rename" /></svg>Rename</button>
            </div>
            <div class="glabel">Organize</div>
          </div>
          <div class="group g3">
            <div class="tools">
              <button class="big w42"><svg><use href="#newfolder" /></svg>New folder</button>
              <div class="smalls">
                <button v-for="s in newSmall" :key="s.text"><svg class="i16"><use :href="'#' + s.icon" /></svg>{{ s.text }}<svg class="caret"><use href="#caret" /></svg></button>
              </div>
            </div>
            <div class="glabel">New</div>
          </div>
          <div class="group g4">
            <div class="tools">
              <button class="big w54"><svg><use href="#properties" /></svg><span>Properties<br><svg class="caret"><use href="#caret" /></svg></span></button>
              <div class="smalls">
                <button v-for="s in openSmall" :key="s.text" :class="{ off: s.off }"><svg class="i16"><use :href="'#' + s.icon" /></svg>{{ s.text }}<svg v-if="s.menu" class="caret"><use href="#caret" /></svg></button>
              </div>
            </div>
            <div class="glabel">Open</div>
          </div>
          <div class="group g5">
            <div class="tools">
              <div class="smalls">
                <button v-for="s in selectSmall" :key="s.text"><svg class="i16"><use :href="'#' + s.icon" /></svg>{{ s.text }}</button>
              </div>
            </div>
            <div class="glabel">Select</div>
          </div>
        </div>
        <div class="address">
          <button class="nb" aria-label="Back"><svg class="i14"><use href="#arrowl" /></svg></button>
          <button class="nb dim" aria-label="Forward"><svg class="i14"><use href="#arrowr" /></svg></button>
          <button class="nb thin" aria-label="Recent"><svg class="i8"><use href="#chevd" /></svg></button>
          <button class="nb up" aria-label="Up"><svg class="i14"><use href="#arrowu" /></svg></button>
          <div class="path">
            <svg class="i16"><use href="#folder" /></svg>
            <template v-for="c in crumbs" :key="c">
              <svg class="i10 sep"><use href="#chevr" /></svg><button class="crumb">{{ c }}</button>
            </template>
            <span class="grow"></span>
            <button class="pb" aria-label="Previous locations"><svg class="i10"><use href="#chevd" /></svg></button>
            <button class="pb" aria-label="Refresh"><svg class="i12"><use href="#refresh" /></svg></button>
          </div>
          <div class="find">
            <svg class="i14"><use href="#mag" /></svg>
            <input type="text" placeholder="Search Labtask4" aria-label="Search Labtask4">
          </div>
        </div>
        <div class="body">
          <nav class="tree">
            <div v-for="g in nav" :key="g.head.text" class="branch">
              <button class="node"><svg class="i16"><use :href="'#' + g.head.icon" /></svg><span>{{ g.head.text }}</span></button>
              <button v-for="n in g.items" :key="n.text" class="node sub" :class="{ on: n.on }">
                <svg class="i16"><use :href="'#' + n.icon" /></svg><span>{{ n.text }}</span>
                <svg v-if="n.pin" class="pinned"><use href="#minipin" /></svg>
              </button>
            </div>
          </nav>
          <div class="scroll">
            <button aria-label="Scroll up"><svg class="i8"><use href="#chevu" /></svg></button>
            <i class="thumb"></i>
            <button class="down" aria-label="Scroll down"><svg class="i8"><use href="#chevd" /></svg></button>
          </div>
          <main class="files">
            <table>
              <colgroup><col class="c1"><col class="c2"><col class="c3"><col class="c4"></colgroup>
              <thead>
                <tr><th>Name<svg class="i8 sort"><use href="#chevu" /></svg></th><th>Date modified</th><th>Type</th><th>Size</th></tr>
              </thead>
              <tbody>
                <tr v-for="f in files" :key="f[1]" :class="{ sel: f[1] === selected }" @click="selected = f[1]">
                  <td><div class="fname"><svg class="i16"><use :href="'#' + f[0]" /></svg>{{ f[1] }}</div></td>
                  <td>{{ f[2] }}</td><td>{{ f[3] }}</td><td>{{ f[4] }}</td>
                </tr>
              </tbody>
            </table>
          </main>
        </div>
        <footer class="status">
          <span>16 items</span><i></i><span class="second">1 item selected</span><span>245 bytes</span><i></i>
          <span class="grow"></span>
          <button class="view cur" aria-label="Details"><svg class="i16"><use href="#details" /></svg></button>
          <button class="view" aria-label="Thumbnails"><svg class="i14"><use href="#picture" /></svg></button>
        </footer>
      </div>
      <footer class="taskbar main">
        <button class="tb48" aria-label="Start"><svg class="i16"><use href="#winlogo" /></svg></button>
        <div class="tsearch"><svg class="i18"><use href="#mag" /></svg><input type="text" placeholder="Type here to search" aria-label="Type here to search"></div>
        <button class="tb48" aria-label="Cortana"><svg class="i18"><use href="#ring" /></svg></button>
        <button class="tb48" aria-label="Task View"><svg class="i18"><use href="#taskview" /></svg></button>
        <div class="apps">
          <button v-for="a in apps" :key="a.name" :aria-label="a.name" :class="{ run: a.run, active: a.active }"><svg :class="a.icon === 'gear' ? 'i20' : 'i24'"><use :href="'#' + a.icon" /></svg></button>
        </div>
        <span class="grow"></span>
        <div class="tray">
          <svg class="i24"><use href="#weather" /></svg><span class="temp">31°C</span>
          <svg class="i12 trayup"><use href="#chevu" /></svg>
          <svg class="i18"><use href="#dropboxn" /></svg>
          <svg class="i16"><use href="#trayonedrive" /></svg>
          <svg class="i16"><use href="#wifi" /></svg>
          <svg class="i16"><use href="#battery" /></svg>
          <svg class="i16"><use href="#volume" /></svg>
          <span class="lang">ENG</span>
        </div>
        <div class="clock"><span>7:25 PM</span><span>6/26/2021</span></div>
        <button class="notify" aria-label="Notifications"><svg><use href="#note" /></svg></button>
        <i class="peek"></i>
      </footer>
    </section>

    <section class="screen">
      <div class="chrome">
        <header class="strip">
          <button v-for="(t, i) in wideTabs" :key="'a' + i" class="tab" :aria-label="t"><svg class="i16"><use :href="'#' + t" /></svg></button>
          <button v-for="(t, i) in slimTabs" :key="'b' + i" class="tab slim" :aria-label="t"><svg class="i16"><use :href="'#' + t" /></svg></button>
          <button class="tab open" aria-label="Close tab"><svg class="i10"><use href="#tabx" /></svg></button>
          <button class="plus" aria-label="New tab"><svg class="i12"><use href="#plus" /></svg></button>
          <span class="grow"></span>
          <button class="tm" aria-label="Tab search"><svg class="i14"><use href="#tabmenu" /></svg></button>
          <div class="winbtns">
            <button aria-label="Minimize"><svg class="i12"><use href="#min" /></svg></button>
            <button aria-label="Restore"><svg class="i12"><use href="#restore" /></svg></button>
            <button aria-label="Close"><svg class="i12"><use href="#close" /></svg></button>
          </div>
        </header>
        <div class="toolbar">
          <button class="t32" aria-label="Back"><svg class="i16"><use href="#arrowl" /></svg></button>
          <button class="t32 dim" aria-label="Forward"><svg class="i16"><use href="#arrowr" /></svg></button>
          <button class="t32" aria-label="Reload"><svg class="i16"><use href="#reload" /></svg></button>
          <button class="t32" aria-label="Home"><svg class="i18"><use href="#home" /></svg></button>
          <div class="omni">
            <svg class="i16"><use href="#info" /></svg>
            <span class="url"><b>localhost</b>/Labtask4/CHANGE%20PASSWORD.php</span>
            <span class="grow"></span>
            <button class="t32" aria-label="Zoom"><svg class="i16"><use href="#zoomin" /></svg></button>
            <button class="t32" aria-label="Bookmark"><svg class="i16"><use href="#star" /></svg></button>
          </div>
          <button class="t32" aria-label="Translate"><svg class="i16"><use href="#translate" /></svg></button>
          <button class="t32" aria-label="Grammarly"><svg class="i16"><use href="#grammarly" /></svg></button>
          <button class="t32" aria-label="Download manager"><svg class="i16"><use href="#idm" /></svg></button>
          <button class="t32" aria-label="Extensions"><svg class="i16"><use href="#puzzle" /></svg></button>
          <button class="t32" aria-label="Profile"><svg class="i22"><use href="#avatar" /></svg></button>
          <button class="t32" aria-label="Menu"><svg class="i16"><use href="#dots" /></svg></button>
        </div>
        <nav class="marks">
          <div class="mlist">
            <a v-for="b in bookmarks" :key="b.text" href="#"><svg class="i16"><use :href="'#' + b.icon" /></svg>{{ b.text }}</a>
          </div>
          <span class="grow"></span>
          <button class="more" aria-label="More bookmarks"><svg class="i10"><use href="#more" /></svg></button>
          <i></i>
          <a href="#" class="other"><svg class="i16"><use href="#bmfolder" /></svg>Other bookmarks</a>
          <i></i>
          <a href="#" class="rlist"><svg class="i16"><use href="#reading" /></svg>Reading list</a>
        </nav>
        <div class="page">
          <div class="phead">
            <div class="logo">
              <svg viewBox="0 0 98 84"><path d="M83 0h7L64 36l-5-7zM0 83l27-37 5 6L8 83z" fill="#22b14c"/><path d="M0 0h45l52 83H52z" fill="#22b14c"/></svg>
              <span>Company</span>
            </div>
            <div class="login">Logged in as <a href="#">Bob</a> |<a href="#">Logout</a></div>
          </div>
          <hr>
          <div class="cols">
            <aside>
              <div>Account</div>
              <hr>
              <ul><li v-for="l in links" :key="l"><a href="#">{{ l }}</a></li></ul>
            </aside>
            <section class="change">
              <div>CHANGE PASSWORD</div>
              <form id="pw" @submit.prevent>
                <label for="cur">Current Password :</label><input id="cur" type="password">
                <label for="new">New Password :</label><input id="new" type="password">
                <label for="re">Retype New Password :</label><input id="re" type="password">
              </form>
            </section>
          </div>
          <hr>
          <div class="pfoot"><span>Copyright © 2017</span><button type="submit" form="pw">Submit</button></div>
        </div>
      </div>
      <footer class="taskbar wide">
        <button class="tb48" aria-label="Start"><svg class="i16"><use href="#winlogo" /></svg></button>
        <button class="tb48" aria-label="Search"><svg class="i18"><use href="#mag" /></svg></button>
        <button class="tb48" aria-label="Cortana"><svg class="i18"><use href="#ring" /></svg></button>
        <button class="tb48" aria-label="Task View"><svg class="i18"><use href="#taskview" /></svg></button>
        <div class="apps">
          <button v-for="a in apps" :key="a.name" :aria-label="a.name" :class="{ run: a.run, active: a.active }"><svg :class="a.icon === 'gear' ? 'i20' : 'i24'"><use :href="'#' + a.icon" /></svg></button>
        </div>
        <span class="grow"></span>
        <div class="clock"><span>7:25 PM</span><span>6/26/2021</span></div>
      </footer>
    </section>
  </div>
</template>

<style>
html, body { height: 100%; background: #191919; }
</style>

<style scoped>
* { box-sizing: border-box; }
button, input { font: inherit; color: inherit; background: none; border: 0; padding: 0; margin: 0; }
.sprite { position: absolute; width: 0; height: 0; }
svg { flex: none; display: block; overflow: visible; }
.i8 { width: 8px; height: 8px; }
.i10 { width: 10px; height: 10px; }
.i12 { width: 12px; height: 12px; }
.i14 { width: 14px; height: 14px; }
.i16 { width: 16px; height: 16px; }
.i18 { width: 18px; height: 18px; }
.i20 { width: 20px; height: 20px; }
.i22 { width: 22px; height: 22px; }
.i24 { width: 24px; height: 24px; }
.grow { flex: 1; }

.desk { display: flex; height: 100vh; font: 12px/16px "Open Sans", "Noto Sans", sans-serif; white-space: nowrap; }
.screen { flex: 1 1 0; min-width: 0; display: flex; flex-direction: column; overflow: hidden; }
.explorer, .chrome { flex: 1; min-height: 0; display: flex; flex-direction: column; }
.explorer { background: #202020; color: #fff; }

.title { display: flex; align-items: center; height: 23px; background: #2b2b2b; }
.tick { width: 3px; height: 13px; border: 1px solid #666; border-width: 0 1px; margin: 0 7px 0 6px; }
.quick1 { margin: 0 6px 0 2px; }
.tcaret { width: 8px; height: 6px; margin: 0 3px 0 5px; }
.tname { color: #9a9a9a; }
.winbtns { margin-left: auto; display: flex; }
.winbtns button { width: 46px; height: 20px; display: grid; place-items: center; color: #999; }

.tabs { display: flex; align-items: center; height: 23px; background: #000; }
.tabs button { width: 56px; height: 23px; }
.tabs .file { background: #0063b1; }
.tabs .cur { width: 58px; background: #202020; }
.tabs .cur + button { width: 57px; }
.tabs .mini { width: 22px; display: grid; place-items: center; color: #ccc; }

.ribbon { display: flex; height: 93px; padding-top: 2px; border-top: 1px solid #2b2b2b; border-bottom: 1px solid #2d2d2d; background: #202020; }
.group { display: flex; flex-direction: column; border-right: 1px solid #3d3d3d; margin-bottom: 4px; }
.g1 { width: 263px; padding-left: 4px; }
.g2 { width: 191px; padding-left: 3px; }
.g3 { width: 145px; padding-left: 3px; }
.g4 { width: 133px; padding-left: 5px; }
.g5 { width: 115px; padding-left: 4px; }
.tools { display: flex; flex: 1; }
.big { display: flex; flex-direction: column; align-items: center; padding-top: 5px; line-height: 13px; white-space: normal; text-align: center; }
.big > svg { width: 32px; height: 32px; margin-bottom: 4px; }
.w38 { width: 38px; }
.w42 { width: 42px; }
.w46 { width: 46px; }
.w50 { width: 50px; }
.w54 { width: 54px; }
.w70 { width: 70px; }
.off { color: #a5a5a5; }
.caret { width: 6px; height: 4px; color: #ddd; }
.big .caret { display: inline-block; vertical-align: middle; }
.smalls { padding: 2px 0 0 2px; }
.w42 + .smalls, .w54 + .smalls { padding-left: 4px; }
.g5 .smalls { padding-left: 3px; }
.smalls button { display: flex; align-items: center; gap: 3px; height: 22px; }
.rule { width: 1px; height: 55px; margin: 7px 2px 0 5px; background: #555; }
.glabel { height: 17px; line-height: 17px; text-align: center; color: #b8b8b8; }

.address { display: flex; align-items: center; height: 42px; padding: 0 12px; background: #191919; }
.nb { width: 30px; display: grid; place-items: center; }
.nb:first-child { width: 14px; margin-right: 8px; }
.nb.dim { color: #777; }
.nb.thin { width: 16px; }
.nb.up { width: 26px; }
.path { flex: 1; display: flex; align-items: center; height: 30px; border: 1px solid #535353; padding-left: 3px; }
.sep { color: #aaa; margin: 0 6px 0 5px; }
.path .i16 + .sep { margin-right: 7px; margin-left: 4px; }
.pb { width: 30px; height: 28px; display: grid; place-items: center; color: #aaa; }
.find { display: flex; align-items: center; width: 202px; height: 30px; margin-left: 12px; padding-left: 14px; gap: 12px; border: 1px solid #535353; color: #888; }
.find input { flex: 1; min-width: 0; outline: none; }
input::placeholder { color: inherit; opacity: 1; }

.body { flex: 1; min-height: 0; display: flex; }
.tree { width: 140px; padding-top: 16px; background: #191919; overflow: hidden; }
.branch { padding-bottom: 8px; }
.node { display: flex; align-items: center; width: 137px; height: 22px; margin: 0 0 2px 1px; padding-left: 23px; gap: 5px; overflow: hidden; }
.node.sub { padding-left: 31px; }
.branch .node:not(.sub) { width: 139px; gap: 4px; }
.node.on { background: #333; }
.pinned { width: 10px; height: 10px; margin-left: auto; margin-right: 2px; }
.scroll { width: 19px; display: flex; flex-direction: column; background: #191919; border-right: 1px solid #2b2b2b; padding-right: 3px; color: #777; }
.scroll button { height: 17px; display: grid; place-items: center; }
.scroll .down { height: 25px; }
.thumb { flex: 1; background: #4d4d4d; }
.files { flex: 1; padding-left: 16px; }
table { table-layout: fixed; width: 601px; border-collapse: separate; border-spacing: 0; }
.c1 { width: 257px; }
.c2 { width: 144px; }
.c3 { width: 120px; }
.c4 { width: 80px; }
th { position: relative; height: 25px; padding: 0 0 0 6px; border-right: 1px solid #636363; font-weight: 400; text-align: left; color: #dedede; }
th:first-child { padding-left: 2px; }
.sort { position: absolute; left: 122px; top: 0; color: #999; }
tbody::before { content: ""; display: block; height: 7px; }
td { height: 21px; padding: 0 0 0 6px; border-bottom: 1px solid transparent; background-clip: padding-box; color: #dedede; }
td:first-child { padding-left: 3px; color: #fff; }
td:last-child { padding-right: 3px; border-right: 5px solid transparent; text-align: right; }
.sel td { background-color: #333; }
.fname { display: flex; align-items: center; gap: 4px; }

.status { display: flex; align-items: center; height: 23px; padding-left: 14px; background: #333; color: #dedede; }
.status i { width: 1px; height: 11px; margin: 0 10px; background: #fff; }
.second { margin-right: 6px; }
.view { width: 26px; height: 22px; display: grid; place-items: center; }
.view.cur { width: 22px; background: #666; border: 1px solid #888; }

.taskbar { display: flex; height: 40px; background: #393532; color: #fff; }
.taskbar.main { background: linear-gradient(90deg, #393532 0%, #3b3836 62%, #2b2a22 69%, #302b1d 80%, #33302d 92%, #353230 100%); }
.tb48 { width: 48px; display: grid; place-items: center; }
.tsearch { display: flex; align-items: center; width: 344px; padding-left: 11px; gap: 10px; border: 1px solid #5c5c5c; background: #333; font-size: 15px; color: #fff; }
.tsearch input { flex: 1; min-width: 0; outline: none; color: #c8c8c8; }
.apps { display: flex; padding-left: 2px; }
.apps button { position: relative; width: 40px; display: grid; place-items: center; }
.apps .run::after { content: ""; position: absolute; left: 4px; right: 4px; bottom: 0; height: 2px; background: #76b9ed; }
.apps .active { background: #64605e; }
.apps .active::after { left: 0; right: 0; }
.wide .apps { padding-left: 3px; }
.wide .apps button { width: 49px; }
.tray { display: flex; align-items: center; gap: 7px; }
.temp { font-size: 14px; }
.trayup { margin: 0 2px 0 10px; }
.lang { margin-left: 3px; }
.clock { display: flex; flex-direction: column; justify-content: center; text-align: center; line-height: 18px; width: 76px; }
.notify { width: 42px; display: grid; place-items: center; }
.notify svg { width: 26px; height: 28px; }
.peek { width: 5px; margin-left: 1px; border-left: 1px solid #6c6c6c; }
.wide .clock { width: 64px; }

.chrome { background: #fff; color: #222; }
.strip { display: flex; height: 34px; padding-left: 9px; background: #ffdc5f; }
.tab { position: relative; flex: 0 1 31px; display: grid; place-items: center; }
.tab.slim { flex-basis: 30px; }
.tab::after { content: ""; position: absolute; right: 0; top: 7px; width: 1px; height: 20px; background: #ab9443; }
.slim:nth-last-child(6)::after { display: none; }
.tab.open { flex: none; width: 32px; margin-left: -2px; border-radius: 8px 8px 0 0; background: #fff; }
.tab.open::after { left: -8px; right: -8px; top: auto; bottom: 0; width: auto; height: 8px; background: radial-gradient(circle at 0 0, transparent 8px, #fff 8px) left / 8px 8px no-repeat, radial-gradient(circle at 100% 0, transparent 8px, #fff 8px) right / 8px 8px no-repeat; }
.plus { width: 44px; display: grid; place-items: center; }
.tm { width: 26px; display: grid; place-items: center; margin-right: 8px; }
.strip .winbtns { margin-left: 0; }
.strip .winbtns button { height: 28px; color: #222; }
.toolbar { display: flex; align-items: center; height: 36px; padding: 0 6px; }
.t32 { width: 32px; display: grid; place-items: center; }
.t32.dim { color: #a0a0a0; }
.omni { flex: 1; display: flex; align-items: center; height: 28px; margin: 0 6px; padding-left: 10px; border-radius: 14px; background: #e1e1e1; }
.omni .t32:last-child { margin-right: 2px; }
.url { margin-left: 9px; font-size: 14px; color: #666; }
.url b { font-weight: 400; color: #222; }
.marks { display: flex; align-items: center; height: 33px; padding: 0 14px 5px; border-bottom: 1px solid #b4b4b4; }
.marks a { display: flex; align-items: center; gap: 8px; color: #222; text-decoration: none; }
.mlist { display: grid; grid-template-columns: 68px 124px 98px 154px 71px 86px 70px 113px auto; }
.marks i { width: 1px; height: 16px; background: #b8b8b8; }
.more { margin-right: 9px; }
.other { margin: 0 11px; }
.rlist { margin-left: 11px; }

.page { flex: 1; padding: 0 10px; font: 20px/23px "Liberation Serif", serif; color: #000; }
.page a { color: #551a8b; text-decoration-thickness: 2px; }
.page hr { height: 3px; margin: 0; border: 1px solid #9a9a9a; border-color: #9a9a9a #eee #eee #9a9a9a; }
.phead { display: flex; justify-content: space-between; height: 168px; padding: 24px 13px 0 29px; }
.logo { display: flex; align-items: flex-start; padding-top: 15px; }
.logo svg { width: 98px; height: 84px; }
.logo span { margin: 13px 0 0 -8px; font: 700 52px/60px "DejaVu Sans Mono", monospace; }
.cols { display: flex; margin-top: 22px; }
aside { flex: 0 0 472px; padding: 12px 13px 33px 25px; border-right: 2px solid #000; }
aside hr { margin: 10px 0 20px !important; }
ul { margin: 0; padding-left: 50px; }
.change { padding-left: 25px; }
form { display: grid; grid-template-columns: 199px 206px; gap: 24px 1px; margin-top: 69px; }
label { text-align: right; }
form input { height: 27px; border: 1px solid #767676; border-radius: 2px; background: #fff; }
.pfoot { display: flex; align-items: flex-start; gap: 98px; padding: 24px 0 0 600px; }
.pfoot span { padding-top: 7px; }
.pfoot button { width: 72px; height: 28px; border: 1px solid #767676; border-radius: 3px; background: #efefef; font: 17px/20px "Liberation Sans", sans-serif; }
</style>
